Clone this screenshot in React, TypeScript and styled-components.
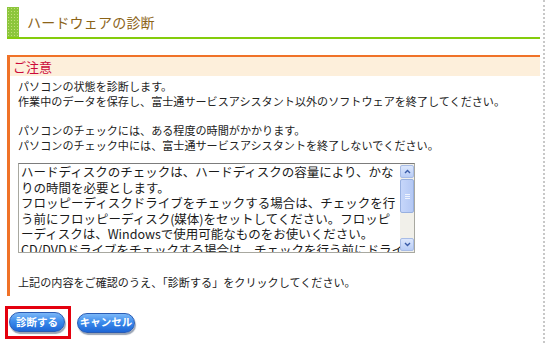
import * as React from 'react'
import styled, {createGlobalStyle} from 'styled-components'

const Global = createGlobalStyle`
  html, body {
    margin: 0;
    padding: 0;
    background: #fff;
  }
  body {
    font-family: "Noto Sans CJK JP", "Noto Sans", sans-serif;
    color: #222;
  }
`

// Page frame with the dotted edge on the right
const Frame = styled.div`
  width: 543px;
  height: 343px;
  border-right: 2px dotted #c8c8c8;
  overflow: hidden;
`

const Content = styled.div`
  width: 533px;
  padding: 7px 0 0 7px;
`

// Title bar
const TitleBar = styled.div`
  display: flex;
  align-items: center;
  height: 30px;
  border-bottom: 2px solid #84cc0c;
`

const TitleMark = styled.div`
  width: 12px;
  align-self: stretch;
  background-color: #8cc63c;
  background-image: radial-gradient(#c4e07a 0.7px, transparent 0.9px);
  background-size: 3px 3px;
`

const Title = styled.h1`
  margin: 0 0 0 8px;
  font-size: 14px;
  font-weight: normal;
  letter-spacing: 0.2px;
  color: #8c6418;
  line-height: 1;
`

// Notice box
const Notice = styled.section`
  margin-top: 16px;
  border-top: 2px solid #f07228;
  border-left: 3px solid #f07228;
`

const NoticeHead = styled.div`
  height: 19px;
  display: flex;
  align-items: center;
  padding-left: 3px;
  background: #fdefdb;
  color: #cc0a3a;
  font-size: 13px;
  line-height: 1;
`

const NoticeBody = styled.div`
  padding: 3px 0 6px 8px;
  font-size: 11.1px;
  line-height: 15px;
`

const Para = styled.p`
  margin: 0;
  white-space: nowrap;
`

const Spacer = styled.div`
  height: 14px;
`

// Read-only scrolling text box
const TextBox = styled.div`
  display: flex;
  width: 397px;
  height: 90px;
  margin: 10px 0 22px;
  border: 1px solid #a8a8a0;
  border-top-color: #7c7c7c;
  background: #fff;
  box-sizing: border-box;
`

const TextLines = styled.div`
  flex: 1;
  overflow: hidden;
  padding: 0 0 0 2px;
  font-size: 12.5px;
  line-height: 15.5px;
  color: #1a1a1a;
`

const TextLine = styled.div`
  white-space: nowrap;
  height: 15.5px;
`

const ScrollBar = styled.div`
  width: 14px;
  display: flex;
  flex-direction: column;
  gap: 1px;
  background: #f1f0ea;
  padding: 1px 0;
`

const Arrow = styled.div`
  height: 13px;
  border: 1px solid #a8bce6;
  border-radius: 2px;
  background: linear-gradient(#dbe6fc, #b9cdf6);
  display: flex;
  align-items: center;
  justify-content: center;
  box-sizing: border-box;
`

const Thumb = styled.div`
  height: 34px;
  border: 1px solid #98b0e0;
  border-radius: 2px;
  background: linear-gradient(90deg, #c6d6fa, #b4c8f4);
  display: flex;
  align-items: center;
  justify-content: center;
  box-sizing: border-box;
`

const Track = styled.div`
  flex: 1;
`

// Buttons
const ButtonRow = styled.div`
  display: flex;
  align-items: center;
  gap: 6px;
  margin: 10px 0 0 -2px;
`

const Highlight = styled.div`
  border: 3px solid #e4000e;
  padding: 3px 3px 4px 1px;
  display: flex;
`

const PillButton = styled.button<{$w: number}>`
  width: ${({$w}) => $w}px;
  height: 20px;
  padding: 0;
  border: 1px solid #2a5cb4;
  border-radius: 10px;
  background: linear-gradient(#7cb8f8 0%, #3d8cec 45%, #1d66d6 100%);
  box-shadow: 1px 2px 1px #9aa4b4;
  color: #fff;
  font-family: "Noto Sans CJK JP", sans-serif;
  font-size: 10.5px;
  font-weight: bold;
  line-height: 1;
  cursor: pointer;
`

function Chevron({up}: {up?: boolean}) {
  return (
    <svg width="7" height="5" viewBox="0 0 7 5">
      <path d={up ? 'M1 4 L3.5 1.5 L6 4' : 'M1 1 L3.5 3.5 L6 1'}
        fill="none" stroke="#3a5ca8" strokeWidth="1.4" />
    </svg>
  )
}

const detailLines = [
  'ハードディスクのチェックは、ハードディスクの容量により、かな',
  'りの時間を必要とします。',
  'フロッピーディスクドライブをチェックする場合は、チェックを行',
  'う前にフロッピーディスク(媒体)をセットしてください。フロッピ',
  'ーディスクは、Windowsで使用可能なものをお使いください。',
  'CD/DVDドライブをチェックする場合は、チェックを行う前にドライ',
]

export default function App() {
  return (
    <Frame>
      <Global />
      <Content>
        <TitleBar>
          <TitleMark />
          <Title>ハードウェアの診断</Title>
        </TitleBar>

        <Notice>
          <NoticeHead>ご注意</NoticeHead>
          <NoticeBody>
            <Para>パソコンの状態を診断します。</Para>
            <Para>作業中のデータを保存し、富士通サービスアシスタント以外のソフトウェアを終了してください。</Para>
            <Spacer />
            <Para>パソコンのチェックには、ある程度の時間がかかります。</Para>
            <Para>パソコンのチェック中には、富士通サービスアシスタントを終了しないでください。</Para>

            <TextBox>
              <TextLines>
                {detailLines.map(line => <TextLine key={line}>{line}</TextLine>)}
              </TextLines>
              <ScrollBar>
                <Arrow><Chevron up /></Arrow>
                <Thumb>
                  <svg width="5" height="5" viewBox="0 0 5 5">
                    <path d="M0 0.5 H5 M0 2.5 H5 M0 4.5 H5" stroke="#eef3fe" strokeWidth="1" />
                  </svg>
                </Thumb>
                <Track />
                <Arrow><Chevron /></Arrow>
              </ScrollBar>
            </TextBox>

            <Para>上記の内容をご確認のうえ、「診断する」をクリックしてください。</Para>
          </NoticeBody>
        </Notice>

        <ButtonRow>
          <Highlight>
            <PillButton $w={56}>診断する</PillButton>
          </Highlight>
          <PillButton $w={58}>キャンセル</PillButton>
        </ButtonRow>
      </Content>
    </Frame>
  )
}
